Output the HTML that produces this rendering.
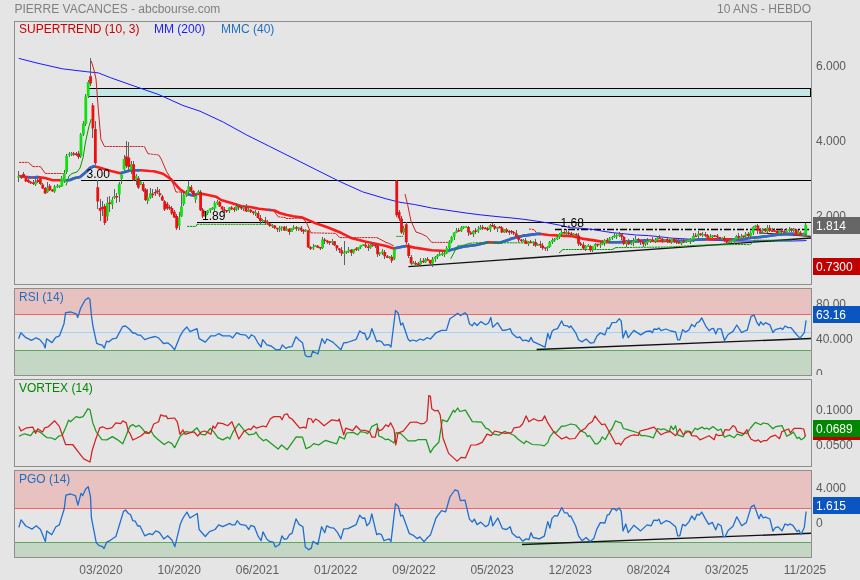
<!DOCTYPE html>
<html><head><meta charset="utf-8"><style>
html,body{margin:0;padding:0;background:#e5e5e5;width:860px;height:580px;overflow:hidden}
svg{display:block;will-change:transform}
text{font-family:"Liberation Sans",sans-serif}
</style></head><body>
<svg width="860" height="580">
<defs><clipPath id="cr"><rect x="812" y="288" width="48" height="87"/></clipPath></defs>
<text x="14.5" y="13" fill="#808080" font-size="12" text-anchor="start" >PIERRE VACANCES - abcbourse.com</text>
<text x="811" y="13" fill="#808080" font-size="12" text-anchor="end" >10 ANS - HEBDO</text>
<rect x="14.5" y="21.5" width="797" height="263" fill="#e5e5e5" stroke="#8e8e8e" stroke-width="1"/>
<rect x="14.5" y="288.5" width="797" height="87" fill="#e5e5e5" stroke="#8e8e8e" stroke-width="1"/>
<rect x="14.5" y="379.5" width="797" height="87" fill="#e5e5e5" stroke="#8e8e8e" stroke-width="1"/>
<rect x="14.5" y="470.5" width="797" height="87" fill="#e5e5e5" stroke="#8e8e8e" stroke-width="1"/>
<rect x="15" y="289" width="796" height="25" fill="#e8c1c1"/>
<rect x="15" y="351" width="796" height="24" fill="#c4d7c4"/>
<line x1="15" y1="314.5" x2="811" y2="314.5" stroke="#f06464" stroke-width="1"/>
<line x1="15" y1="350.5" x2="811" y2="350.5" stroke="#60a860" stroke-width="1"/>
<line x1="15" y1="332.5" x2="811" y2="332.5" stroke="#a4d0fa" stroke-width="1"/>
<rect x="15" y="471" width="796" height="37" fill="#e8c1c1"/>
<rect x="15" y="543" width="796" height="14" fill="#c4d7c4"/>
<line x1="15" y1="508.5" x2="811" y2="508.5" stroke="#f06464" stroke-width="1"/>
<line x1="15" y1="542.5" x2="811" y2="542.5" stroke="#60a860" stroke-width="1"/>
<text x="19" y="33" fill="#cc0000" font-size="12" text-anchor="start" >SUPERTREND (10, 3)</text>
<text x="154" y="33" fill="#1a1aff" font-size="12" text-anchor="start" >MM (200)</text>
<text x="221" y="33" fill="#1f6fc0" font-size="12" text-anchor="start" >MMC (40)</text>
<text x="19" y="301" fill="#1f6fc0" font-size="12" text-anchor="start" >RSI (14)</text>
<text x="19" y="392" fill="#008800" font-size="12" text-anchor="start" >VORTEX (14)</text>
<text x="19" y="483" fill="#1f6fc0" font-size="12" text-anchor="start" >PGO (14)</text>
<text x="816" y="70" fill="#5a5a5a" font-size="12" text-anchor="start" >6.000</text>
<text x="816" y="145" fill="#5a5a5a" font-size="12" text-anchor="start" >4.000</text>
<text x="816" y="220" fill="#5a5a5a" font-size="12" text-anchor="start" >2.000</text>
<text x="816" y="308" fill="#5a5a5a" font-size="12" text-anchor="start" >80.00</text>
<text x="816" y="343" fill="#5a5a5a" font-size="12" text-anchor="start" >40.000</text>
<text x="816" y="378" fill="#5a5a5a" font-size="12" text-anchor="start" clip-path="url(#cr)">0</text>
<text x="816" y="414" fill="#5a5a5a" font-size="12" text-anchor="start" >0.1000</text>
<text x="816" y="449" fill="#5a5a5a" font-size="12" text-anchor="start" >0.0500</text>
<text x="816" y="492" fill="#5a5a5a" font-size="12" text-anchor="start" >4.000</text>
<text x="816" y="527" fill="#5a5a5a" font-size="12" text-anchor="start" >0</text>
<rect x="813" y="217" width="47" height="17" fill="#666666"/>
<text x="816" y="230" fill="#ffffff" font-size="12" text-anchor="start" >1.814</text>
<rect x="813" y="258" width="47" height="17" fill="#c00000"/>
<text x="816" y="271" fill="#ffffff" font-size="12" text-anchor="start" >0.7300</text>
<rect x="813" y="306" width="47" height="17" fill="#0a55c0"/>
<text x="816" y="319" fill="#ffffff" font-size="12" text-anchor="start" >63.16</text>
<rect x="813" y="423" width="47" height="17" fill="#c00000"/>
<rect x="813" y="420" width="47" height="17" fill="#008800"/>
<text x="816" y="433" fill="#ffffff" font-size="12" text-anchor="start" >0.0689</text>
<rect x="813" y="497" width="47" height="17" fill="#0a55c0"/>
<text x="816" y="510" fill="#ffffff" font-size="12" text-anchor="start" >1.615</text>
<text x="101.0" y="574" fill="#606060" font-size="12" text-anchor="middle" >03/2020</text>
<text x="179.2" y="574" fill="#606060" font-size="12" text-anchor="middle" >10/2020</text>
<text x="257.4" y="574" fill="#606060" font-size="12" text-anchor="middle" >06/2021</text>
<text x="335.7" y="574" fill="#606060" font-size="12" text-anchor="middle" >01/2022</text>
<text x="413.9" y="574" fill="#606060" font-size="12" text-anchor="middle" >09/2022</text>
<text x="492.1" y="574" fill="#606060" font-size="12" text-anchor="middle" >05/2023</text>
<text x="570.3" y="574" fill="#606060" font-size="12" text-anchor="middle" >12/2023</text>
<text x="648.5" y="574" fill="#606060" font-size="12" text-anchor="middle" >08/2024</text>
<text x="726.8" y="574" fill="#606060" font-size="12" text-anchor="middle" >03/2025</text>
<text x="805.0" y="574" fill="#606060" font-size="12" text-anchor="middle" >11/2025</text>
<rect x="88.5" y="88.5" width="722" height="8" fill="#c4e8e6" stroke="#000" stroke-width="1"/>
<line x1="81" y1="180.5" x2="811" y2="180.5" stroke="#000" stroke-width="1"/>
<line x1="197" y1="222.5" x2="811" y2="222.5" stroke="#000" stroke-width="1"/>
<line x1="555" y1="229.5" x2="809" y2="229.5" stroke="#000" stroke-width="1.5" stroke-dasharray="7 2 2 2"/>
<polyline points="18.8,58.4 38.0,63.3 62.3,68.8 86.4,71.7 98.4,72.9 110.5,77.7 134.6,86.2 158.8,94.6 183.0,105.5 200.0,111.2 223.3,122.1 246.5,134.9 269.8,146.5 293.0,158.1 316.3,169.8 339.5,181.4 362.8,191.9 386.0,198.8 400.0,202.3 414.5,204.5 431.7,208.0 449.0,210.5 466.0,213.0 480.0,214.8 500.0,216.9 512.0,218.0 524.0,219.3 536.3,221.1 548.4,223.0 560.4,225.3 570.0,227.7 582.0,228.3 594.0,229.6 603.8,231.4 612.2,232.6 624.3,233.8 636.3,235.0 648.4,235.6 660.5,236.8 670.0,238.0 690.0,239.2 731.0,241.0 754.0,241.0 792.7,241.0 806.5,240.6" fill="none" stroke="#1a1aff" stroke-width="1"/>
<line x1="408.4" y1="266.6" x2="811" y2="238" stroke="#111" stroke-width="1.4"/>
<line x1="759" y1="232.8" x2="810.8" y2="236.3" stroke="#222" stroke-width="1.2"/>
<polyline points="19.0,176.0 27.0,177.0 31.0,177.5 38.0,177.1 45.0,178.0 52.8,180.2 64.0,180.2 70.0,180.0 74.0,178.3 80.0,177.0 86.0,172.0 90.0,168.0 94.0,166.3 100.0,167.8 111.0,171.0 120.3,173.3 131.0,170.3 140.5,170.3 149.8,171.0 154.0,171.2 163.0,173.8 171.6,179.8 180.0,189.3 188.0,194.5 194.0,195.5 198.6,193.4 207.0,194.7 216.0,196.7 221.0,200.0 233.0,203.6 241.7,206.2 250.0,207.0 259.0,208.8 267.6,209.7 274.5,210.5 279.7,213.0 286.0,214.8 293.0,216.2 302.5,217.6 313.6,222.4 327.4,227.2 341.0,232.8 352.0,238.3 366.0,241.7 375.6,243.8 386.0,245.9 393.8,248.4 405.9,245.9 414.5,247.6 431.7,250.2 447.0,251.0 462.8,246.7 476.0,245.0 488.0,242.2 500.0,242.8 512.0,238.6 524.3,235.6 538.7,233.8 548.4,235.0 560.4,235.6 572.5,236.2 582.0,238.6 594.0,240.4 606.0,242.2 618.3,242.2 630.3,241.6 647.2,240.4 654.4,241.0 666.0,241.0 684.0,241.0 696.0,239.8 705.8,239.2 716.7,239.2 731.0,239.2 741.0,239.7 749.6,238.0 758.2,237.2 766.9,236.3 775.5,235.0 784.0,234.1 792.7,233.7 801.3,234.6 806.5,233.7" fill="none" stroke="#ff1a1a" stroke-width="2.6" stroke-linejoin="round"/>
<clipPath id="cb"><rect x="28" y="21" width="3.5" height="263"/><rect x="33" y="21" width="5" height="263"/><rect x="64.5" y="21" width="31.099999999999994" height="263"/><rect x="120.3" y="21" width="19.700000000000003" height="263"/><rect x="188" y="21" width="9" height="263"/><rect x="268.5" y="21" width="1.8999999999999773" height="263"/><rect x="393.8" y="21" width="12.199999999999989" height="263"/><rect x="447" y="21" width="41" height="263"/><rect x="493" y="21" width="48" height="263"/><rect x="608.6" y="21" width="38.60000000000002" height="263"/><rect x="672" y="21" width="33.799999999999955" height="263"/><rect x="716.7" y="21" width="6.0" height="263"/><rect x="731" y="21" width="63.39999999999998" height="263"/><rect x="801.3" y="21" width="5.7000000000000455" height="263"/></clipPath>
<polyline points="19.0,176.0 27.0,177.0 31.0,177.5 38.0,177.1 45.0,178.0 52.8,180.2 64.0,180.2 70.0,180.0 74.0,178.3 80.0,177.0 86.0,172.0 90.0,168.0 94.0,166.3 100.0,167.8 111.0,171.0 120.3,173.3 131.0,170.3 140.5,170.3 149.8,171.0 154.0,171.2 163.0,173.8 171.6,179.8 180.0,189.3 188.0,194.5 194.0,195.5 198.6,193.4 207.0,194.7 216.0,196.7 221.0,200.0 233.0,203.6 241.7,206.2 250.0,207.0 259.0,208.8 267.6,209.7 274.5,210.5 279.7,213.0 286.0,214.8 293.0,216.2 302.5,217.6 313.6,222.4 327.4,227.2 341.0,232.8 352.0,238.3 366.0,241.7 375.6,243.8 386.0,245.9 393.8,248.4 405.9,245.9 414.5,247.6 431.7,250.2 447.0,251.0 462.8,246.7 476.0,245.0 488.0,242.2 500.0,242.8 512.0,238.6 524.3,235.6 538.7,233.8 548.4,235.0 560.4,235.6 572.5,236.2 582.0,238.6 594.0,240.4 606.0,242.2 618.3,242.2 630.3,241.6 647.2,240.4 654.4,241.0 666.0,241.0 684.0,241.0 696.0,239.8 705.8,239.2 716.7,239.2 731.0,239.2 741.0,239.7 749.6,238.0 758.2,237.2 766.9,236.3 775.5,235.0 784.0,234.1 792.7,233.7 801.3,234.6 806.5,233.7" fill="none" stroke="#1f6fd0" stroke-width="2.6" stroke-linejoin="round" clip-path="url(#cb)"/>
<line x1="19" y1="162.4" x2="28.4" y2="162.4" stroke="#d42020" stroke-width="1" stroke-dasharray="2.2 0.6"/>
<line x1="28.4" y1="162.4" x2="33" y2="166.6" stroke="#d42020" stroke-width="1"/>
<line x1="33" y1="166.6" x2="40.4" y2="166.6" stroke="#d42020" stroke-width="1" stroke-dasharray="2.2 0.6"/>
<line x1="40.4" y1="166.6" x2="45.4" y2="173.5" stroke="#d42020" stroke-width="1"/>
<line x1="45.4" y1="173.5" x2="64" y2="173.5" stroke="#d42020" stroke-width="1" stroke-dasharray="2.2 0.6"/>
<line x1="91.2" y1="60.9" x2="94" y2="70" stroke="#d42020" stroke-width="1"/>
<line x1="94" y1="70" x2="96" y2="79" stroke="#d42020" stroke-width="1"/>
<line x1="96" y1="79" x2="98.4" y2="110.3" stroke="#d42020" stroke-width="1"/>
<line x1="98.4" y1="110.3" x2="100.9" y2="139.3" stroke="#d42020" stroke-width="1"/>
<line x1="100.9" y1="139.3" x2="104.5" y2="146.5" stroke="#d42020" stroke-width="1"/>
<line x1="104.5" y1="146.5" x2="144.3" y2="146.5" stroke="#d42020" stroke-width="1" stroke-dasharray="2.2 0.6"/>
<line x1="144.3" y1="146.5" x2="148" y2="153.7" stroke="#d42020" stroke-width="1"/>
<line x1="148" y1="153.7" x2="158.8" y2="155" stroke="#d42020" stroke-width="1" stroke-dasharray="2.2 0.6"/>
<line x1="158.8" y1="155" x2="161.2" y2="159" stroke="#d42020" stroke-width="1"/>
<line x1="161.2" y1="159" x2="166.4" y2="171.2" stroke="#d42020" stroke-width="1"/>
<line x1="166.4" y1="171.2" x2="171.6" y2="179.8" stroke="#d42020" stroke-width="1"/>
<line x1="171.6" y1="179.8" x2="176" y2="192" stroke="#d42020" stroke-width="1"/>
<line x1="176" y1="192" x2="185" y2="192" stroke="#d42020" stroke-width="1" stroke-dasharray="2.2 0.6"/>
<line x1="273.9" y1="210.8" x2="276.2" y2="214.2" stroke="#d42020" stroke-width="1"/>
<line x1="276.2" y1="214.2" x2="278.4" y2="216.8" stroke="#d42020" stroke-width="1"/>
<line x1="278.4" y1="216.8" x2="285.7" y2="217.7" stroke="#d42020" stroke-width="1" stroke-dasharray="2.2 0.6"/>
<line x1="285.7" y1="217.7" x2="286.1" y2="218.5" stroke="#d42020" stroke-width="1"/>
<line x1="286.1" y1="218.5" x2="292.2" y2="218.5" stroke="#d42020" stroke-width="1" stroke-dasharray="2.2 0.6"/>
<line x1="292.2" y1="218.5" x2="302.5" y2="217.6" stroke="#d42020" stroke-width="1" stroke-dasharray="2.2 0.6"/>
<line x1="302.5" y1="217.6" x2="306.7" y2="223" stroke="#d42020" stroke-width="1"/>
<line x1="306.7" y1="223" x2="310.8" y2="232.8" stroke="#d42020" stroke-width="1"/>
<line x1="310.8" y1="232.8" x2="335.6" y2="233.4" stroke="#d42020" stroke-width="1" stroke-dasharray="2.2 0.6"/>
<line x1="335.6" y1="233.4" x2="339.8" y2="237.6" stroke="#d42020" stroke-width="1"/>
<line x1="339.8" y1="237.6" x2="377" y2="237.6" stroke="#d42020" stroke-width="1" stroke-dasharray="2.2 0.6"/>
<line x1="377" y1="237.6" x2="381" y2="239.7" stroke="#d42020" stroke-width="1"/>
<line x1="381" y1="239.7" x2="386" y2="242.4" stroke="#d42020" stroke-width="1"/>
<line x1="386" y1="242.4" x2="388.6" y2="243.3" stroke="#d42020" stroke-width="1"/>
<line x1="388.6" y1="243.3" x2="393.8" y2="245.9" stroke="#d42020" stroke-width="1"/>
<line x1="405" y1="194" x2="407.6" y2="204.5" stroke="#d42020" stroke-width="1"/>
<line x1="407.6" y1="204.5" x2="411" y2="221" stroke="#d42020" stroke-width="1"/>
<line x1="411" y1="221" x2="416" y2="232" stroke="#d42020" stroke-width="1"/>
<line x1="416" y1="232" x2="421.4" y2="233.8" stroke="#d42020" stroke-width="1"/>
<line x1="421.4" y1="233.8" x2="426.6" y2="236.4" stroke="#d42020" stroke-width="1"/>
<line x1="426.6" y1="236.4" x2="431.7" y2="242.4" stroke="#d42020" stroke-width="1"/>
<line x1="431.7" y1="242.4" x2="448" y2="242.4" stroke="#d42020" stroke-width="1" stroke-dasharray="2.2 0.6"/>
<line x1="529" y1="229" x2="534" y2="229.6" stroke="#d42020" stroke-width="1" stroke-dasharray="2.2 0.6"/>
<line x1="534" y1="229.6" x2="536.3" y2="232.6" stroke="#d42020" stroke-width="1"/>
<line x1="66" y1="185.5" x2="69" y2="176" stroke="#009a00" stroke-width="1"/>
<line x1="69" y1="176" x2="72" y2="173.5" stroke="#009a00" stroke-width="1"/>
<line x1="72" y1="173.5" x2="77" y2="172" stroke="#009a00" stroke-width="1"/>
<line x1="77" y1="172" x2="80" y2="168" stroke="#009a00" stroke-width="1"/>
<line x1="80" y1="168" x2="83" y2="158" stroke="#009a00" stroke-width="1"/>
<line x1="83" y1="158" x2="85.5" y2="142" stroke="#009a00" stroke-width="1"/>
<line x1="85.5" y1="142" x2="88.8" y2="127" stroke="#009a00" stroke-width="1"/>
<line x1="88.8" y1="127" x2="91.2" y2="119" stroke="#009a00" stroke-width="1"/>
<line x1="187" y1="226.4" x2="196" y2="226.4" stroke="#009a00" stroke-width="1" stroke-dasharray="2.2 0.6"/>
<line x1="196" y1="226.4" x2="197" y2="224.3" stroke="#009a00" stroke-width="1"/>
<line x1="197" y1="224.3" x2="271" y2="224.3" stroke="#009a00" stroke-width="1" stroke-dasharray="2.2 0.6"/>
<line x1="396.4" y1="236.4" x2="403" y2="236.4" stroke="#009a00" stroke-width="1" stroke-dasharray="2.2 0.6"/>
<line x1="450.7" y1="258.8" x2="457.6" y2="245.9" stroke="#009a00" stroke-width="1"/>
<line x1="457.6" y1="245.9" x2="464.5" y2="245" stroke="#009a00" stroke-width="1" stroke-dasharray="2.2 0.6"/>
<line x1="464.5" y1="245" x2="469.7" y2="243.3" stroke="#009a00" stroke-width="1"/>
<line x1="469.7" y1="243.3" x2="476" y2="242.8" stroke="#009a00" stroke-width="1" stroke-dasharray="2.2 0.6"/>
<line x1="476" y1="242.8" x2="532.7" y2="242.8" stroke="#009a00" stroke-width="1" stroke-dasharray="2.2 0.6"/>
<line x1="559" y1="253" x2="563" y2="249.5" stroke="#009a00" stroke-width="1"/>
<line x1="563" y1="249.5" x2="612.2" y2="249.5" stroke="#009a00" stroke-width="1" stroke-dasharray="2.2 0.6"/>
<line x1="612.2" y1="249.5" x2="615.8" y2="247.6" stroke="#009a00" stroke-width="1"/>
<line x1="615.8" y1="247.6" x2="670" y2="247" stroke="#009a00" stroke-width="1" stroke-dasharray="2.2 0.6"/>
<line x1="670" y1="247" x2="698.6" y2="245.2" stroke="#009a00" stroke-width="1" stroke-dasharray="2.2 0.6"/>
<line x1="698.6" y1="245.2" x2="741" y2="244.5" stroke="#009a00" stroke-width="1" stroke-dasharray="2.2 0.6"/>
<line x1="741" y1="244.5" x2="750.4" y2="244.6" stroke="#009a00" stroke-width="1" stroke-dasharray="2.2 0.6"/>
<line x1="750.4" y1="244.6" x2="754" y2="240.2" stroke="#009a00" stroke-width="1"/>
<line x1="754" y1="240.2" x2="792.7" y2="240.2" stroke="#009a00" stroke-width="1" stroke-dasharray="2.2 0.6"/>
<path d="M18.80 171.0V181.8M21.19 175.0V179.0M23.58 172.0V178.0M25.98 176.0V182.0M28.37 179.0V183.0M30.76 181.0V184.0M33.15 180.0V185.0M35.54 179.0V185.5M37.94 178.0V183.0M40.33 177.0V185.0M42.72 183.0V189.0M45.11 187.0V194.0M47.50 182.0V193.0M49.90 184.0V191.0M52.29 189.0V192.0M54.68 185.0V192.5M57.07 184.0V188.0M59.46 185.0V187.5M61.86 176.0V187.0M64.25 170.0V183.0M66.64 154.0V174.0M69.03 152.0V157.0M71.42 152.0V156.0M73.82 152.0V156.0M76.21 152.0V156.0M78.60 151.0V159.0M80.99 133.0V158.0M83.38 121.0V136.0M85.78 94.0V126.0M88.17 80.0V98.0M90.56 58.0V86.0M92.95 103.0V138.0M95.34 120.9V165.0M97.74 180.2V208.6M100.13 198.8V220.5M102.52 201.0V215.8M104.91 204.0V225.0M107.30 197.0V220.5M109.70 196.0V211.7M112.09 196.7V208.6M114.48 189.0V199.3M116.87 193.0V203.4M119.26 181.7V201.9M121.66 173.0V184.0M124.05 155.0V171.0M126.44 141.0V168.0M128.83 141.7V172.0M131.22 160.7V173.6M133.62 161.2V181.0M136.01 174.0V184.5M138.40 176.0V189.0M140.79 180.8V185.0M143.18 182.0V192.0M145.58 188.0V201.0M147.97 189.0V203.7M150.36 188.0V199.0M152.75 189.0V197.5M155.14 189.0V196.0M157.54 187.0V194.0M159.93 189.0V197.0M162.32 195.0V201.0M164.71 200.0V210.5M167.10 202.0V210.0M169.50 205.0V209.5M171.89 206.0V215.0M174.28 210.0V218.0M176.67 214.0V229.5M179.06 212.0V229.8M181.46 192.3V217.0M183.85 193.0V205.5M186.24 190.0V197.0M188.63 181.0V194.2M191.02 185.0V193.0M193.42 190.0V197.0M195.81 193.0V202.7M198.20 190.0V194.0M200.59 190.0V211.0M202.98 208.0V218.0M205.38 212.1V217.6M207.77 209.5V215.2M210.16 208.0V213.4M212.55 207.1V210.3M214.94 201.4V211.4M217.34 200.3V204.7M219.73 200.5V207.2M222.12 206.1V212.1M224.51 207.0V212.7M226.90 209.5V212.6M229.30 206.7V212.7M231.69 206.3V210.0M234.08 207.0V211.9M236.47 203.2V211.0M238.86 204.3V209.6M241.26 205.6V210.3M243.65 205.0V211.3M246.04 204.3V212.4M248.43 206.9V212.1M250.82 209.0V213.3M253.22 211.2V215.2M255.61 210.3V215.8M258.00 210.7V218.7M260.39 215.1V224.1M262.78 218.9V222.7M265.18 217.2V224.5M267.57 220.0V224.8M269.96 222.7V227.2M272.35 223.7V227.5M274.74 225.3V229.2M277.14 227.5V232.1M279.53 226.0V232.1M281.92 226.4V231.2M284.31 225.7V231.1M286.70 226.1V231.4M289.10 228.0V234.8M291.49 227.8V232.3M293.88 225.4V229.9M296.27 225.5V230.9M298.66 227.1V231.0M301.06 226.0V231.9M303.45 228.7V233.6M305.84 228.6V231.6M308.23 229.8V248.2M310.62 246.3V249.6M313.02 244.2V249.6M315.41 244.5V247.1M317.80 244.8V248.0M320.19 246.8V249.5M322.58 236.6V248.5M324.98 237.9V243.7M327.37 239.6V243.9M329.76 240.8V245.1M332.15 238.9V244.6M334.54 240.8V245.9M336.94 244.7V251.0M339.33 248.0V252.9M341.72 247.4V255.9M344.11 241.0V264.5M346.50 250.7V253.9M348.90 246.6V253.3M351.29 248.8V255.8M353.68 248.6V254.1M356.07 247.2V251.2M358.46 246.9V250.5M360.86 244.6V248.7M363.25 243.6V246.1M365.64 242.8V248.4M368.03 244.2V250.5M370.42 243.3V248.9M372.82 242.3V247.4M375.21 244.8V248.4M377.60 243.2V256.9M379.99 251.7V256.1M382.38 249.3V255.1M384.78 250.0V259.2M387.17 255.3V258.1M389.56 256.1V259.1M391.95 254.8V262.8M394.34 247.0V260.0M396.74 180.0V217.0M399.13 210.0V221.0M401.52 216.0V234.0M403.91 226.0V235.0M406.30 222.0V244.0M408.70 243.0V258.0M411.09 255.0V265.0M413.48 261.2V264.0M415.87 260.9V265.3M418.26 262.1V264.6M420.66 258.4V266.5M423.05 258.4V263.4M425.44 257.9V262.9M427.83 256.7V261.0M430.22 259.8V265.1M432.62 256.6V266.5M435.01 256.1V262.4M437.40 254.4V259.0M439.79 251.3V256.0M442.18 251.1V256.1M444.58 252.4V256.7M446.97 246.3V253.8M449.36 240.0V249.2M451.75 236.4V242.9M454.14 232.3V239.6M456.54 227.9V233.2M458.93 227.8V232.0M461.32 226.0V232.3M463.71 225.9V228.9M466.10 225.8V227.7M468.50 225.8V235.5M470.89 231.4V235.3M473.28 229.5V237.3M475.67 228.1V234.1M478.06 226.3V233.3M480.46 225.1V229.8M482.85 225.0V230.4M485.24 227.1V229.1M487.63 227.0V231.1M490.02 224.2V232.2M492.42 223.2V227.1M494.81 224.1V230.0M497.20 226.5V231.5M499.59 225.7V228.4M501.98 225.9V233.2M504.38 228.5V233.1M506.77 228.4V232.8M509.16 229.8V234.7M511.55 230.3V233.8M513.94 230.6V234.8M516.34 230.4V237.4M518.73 234.9V241.8M521.12 238.6V241.7M523.51 239.2V242.3M525.90 237.8V244.4M528.30 241.2V246.4M530.69 239.6V243.1M533.08 240.5V245.8M535.47 238.9V246.6M537.86 243.4V246.3M540.26 241.0V247.8M542.65 243.2V250.4M545.04 247.5V250.6M547.43 246.1V251.0M549.82 241.3V248.1M552.22 237.9V244.3M554.61 237.6V242.0M557.00 235.8V240.4M559.39 232.9V238.9M561.78 228.9V236.2M564.18 231.0V234.4M566.57 229.4V235.8M568.96 230.8V236.2M571.35 232.4V235.7M573.74 233.2V235.0M576.14 232.9V236.9M578.53 232.7V246.2M580.92 242.0V245.7M583.31 242.1V249.5M585.70 245.0V251.0M588.10 244.2V246.8M590.49 245.0V251.7M592.88 245.5V251.6M595.27 243.2V249.4M597.66 243.6V246.6M600.06 241.1V248.0M602.45 240.2V245.3M604.84 239.3V246.2M607.23 238.0V242.0M609.62 237.2V241.9M612.02 235.9V239.9M614.41 232.7V237.6M616.80 234.2V238.5M619.19 231.6V237.1M621.58 232.9V239.6M623.98 235.8V245.4M626.37 240.3V246.7M628.76 239.2V244.6M631.15 239.9V245.3M633.54 238.4V245.8M635.94 236.1V243.0M638.33 238.1V242.7M640.72 240.0V244.5M643.11 239.0V246.5M645.50 241.2V246.0M647.90 238.1V245.2M650.29 238.6V242.9M652.68 237.2V241.6M655.07 237.6V243.3M657.46 235.7V241.6M659.86 235.2V239.4M662.25 238.0V243.0M664.64 239.2V242.4M667.03 238.4V243.0M669.42 238.8V243.0M671.82 238.1V244.2M674.21 237.7V243.0M676.60 239.4V243.9M678.99 239.4V244.0M681.38 238.5V244.5M683.78 238.8V243.1M686.17 239.7V243.2M688.56 238.5V241.9M690.95 238.0V243.7M693.34 233.2V241.6M695.74 232.7V236.9M698.13 231.1V239.3M700.52 233.4V236.0M702.91 231.5V236.9M705.30 231.6V236.7M707.70 234.3V240.3M710.09 233.5V238.3M712.48 235.1V237.9M714.87 235.3V236.9M717.26 233.8V237.9M719.66 236.7V240.3M722.05 236.9V240.0M724.44 235.5V242.1M726.83 238.8V244.3M729.22 239.8V242.9M731.62 239.1V243.1M734.01 238.1V243.6M736.40 234.7V240.8M738.79 233.3V241.0M741.18 233.8V238.7M743.58 235.9V239.4M745.97 232.2V239.3M748.36 232.1V236.8M750.75 230.5V239.0M753.14 226.3V234.8M755.54 224.9V228.0M757.93 223.8V233.8M760.32 228.2V234.1M762.71 228.4V231.7M765.10 227.6V231.8M767.50 224.7V232.7M769.89 225.0V231.7M772.28 228.3V231.9M774.67 228.2V231.9M777.06 230.1V234.6M779.46 229.9V234.2M781.85 228.2V234.7M784.24 229.3V232.6M786.63 227.9V232.8M789.02 227.2V231.8M791.42 227.8V231.9M793.81 228.0V231.5M796.20 229.2V235.1M798.59 230.3V235.6M800.98 231.2V235.2M803.38 233.0V236.0M805.77 223.0V235.0" stroke="#606060" stroke-width="1" fill="none" shape-rendering="crispEdges"/>
<path d="M17.40 176.0h2.8V177.5h-2.8ZM34.14 181.4h2.8V184.5h-2.8ZM46.10 187.6h2.8V192.3h-2.8ZM53.28 186.8h2.8V191.5h-2.8ZM55.67 185.8h2.8V187.2h-2.8ZM58.06 185.5h2.8V187.0h-2.8ZM60.46 178.3h2.8V186.4h-2.8ZM62.85 173.0h2.8V181.0h-2.8ZM65.24 156.0h2.8V172.0h-2.8ZM67.63 153.8h2.8V155.2h-2.8ZM70.02 153.5h2.8V155.0h-2.8ZM79.59 134.3h2.8V156.5h-2.8ZM81.98 123.4h2.8V134.3h-2.8ZM84.38 96.4h2.8V124.0h-2.8ZM86.77 81.9h2.8V96.4h-2.8ZM105.90 203.0h2.8V216.4h-2.8ZM110.69 199.8h2.8V204.5h-2.8ZM113.08 195.9h2.8V197.4h-2.8ZM117.86 183.8h2.8V194.6h-2.8ZM120.26 174.6h2.8V178.8h-2.8ZM122.65 159.1h2.8V169.5h-2.8ZM129.82 164.3h2.8V170.0h-2.8ZM134.61 175.7h2.8V179.8h-2.8ZM139.39 181.4h2.8V184.5h-2.8ZM146.57 197.5h2.8V201.3h-2.8ZM148.96 193.3h2.8V197.5h-2.8ZM177.66 217.4h2.8V226.0h-2.8ZM180.06 206.5h2.8V216.5h-2.8ZM182.45 194.7h2.8V204.2h-2.8ZM184.84 192.5h2.8V195.0h-2.8ZM187.23 186.2h2.8V192.3h-2.8ZM194.41 196.0h2.8V199.4h-2.8ZM196.80 191.4h2.8V193.7h-2.8ZM203.98 213.2h2.8V216.5h-2.8ZM206.37 210.5h2.8V213.2h-2.8ZM208.76 208.6h2.8V210.5h-2.8ZM211.15 207.8h2.8V209.3h-2.8ZM213.54 202.9h2.8V208.4h-2.8ZM215.94 201.7h2.8V203.2h-2.8ZM227.90 207.4h2.8V210.8h-2.8ZM235.07 206.1h2.8V209.4h-2.8ZM242.25 207.1h2.8V208.6h-2.8ZM247.03 209.7h2.8V211.4h-2.8ZM254.21 212.2h2.8V213.7h-2.8ZM261.38 219.9h2.8V221.4h-2.8ZM270.95 225.0h2.8V226.5h-2.8ZM278.13 228.0h2.8V229.5h-2.8ZM280.52 226.8h2.8V228.6h-2.8ZM285.30 228.7h2.8V230.4h-2.8ZM290.09 228.3h2.8V231.9h-2.8ZM292.48 227.3h2.8V228.8h-2.8ZM297.26 227.2h2.8V228.7h-2.8ZM304.44 229.8h2.8V231.3h-2.8ZM311.62 246.7h2.8V248.4h-2.8ZM314.01 245.5h2.8V247.0h-2.8ZM321.18 239.6h2.8V247.9h-2.8ZM330.75 241.1h2.8V242.6h-2.8ZM342.71 252.2h2.8V253.7h-2.8ZM345.10 251.1h2.8V252.6h-2.8ZM347.50 249.8h2.8V251.4h-2.8ZM352.28 248.9h2.8V252.7h-2.8ZM357.06 247.2h2.8V249.5h-2.8ZM359.46 245.1h2.8V247.2h-2.8ZM361.85 244.2h2.8V245.7h-2.8ZM369.02 244.7h2.8V247.7h-2.8ZM378.59 252.4h2.8V254.2h-2.8ZM380.98 251.4h2.8V252.9h-2.8ZM388.16 256.5h2.8V258.0h-2.8ZM392.94 249.6h2.8V258.6h-2.8ZM402.51 228.3h2.8V232.4h-2.8ZM412.08 262.7h2.8V264.2h-2.8ZM419.26 260.7h2.8V264.2h-2.8ZM424.04 259.6h2.8V262.3h-2.8ZM431.22 259.3h2.8V263.4h-2.8ZM433.61 257.1h2.8V259.3h-2.8ZM436.00 255.3h2.8V257.1h-2.8ZM438.39 254.1h2.8V255.6h-2.8ZM440.78 253.3h2.8V254.8h-2.8ZM443.18 252.9h2.8V254.4h-2.8ZM445.57 248.0h2.8V253.4h-2.8ZM447.96 241.6h2.8V248.0h-2.8ZM450.35 237.1h2.8V241.6h-2.8ZM452.74 232.6h2.8V237.1h-2.8ZM455.14 230.7h2.8V232.6h-2.8ZM459.92 227.4h2.8V230.8h-2.8ZM462.31 226.6h2.8V228.1h-2.8ZM464.70 226.3h2.8V227.8h-2.8ZM471.88 230.9h2.8V234.2h-2.8ZM476.66 229.3h2.8V231.4h-2.8ZM479.06 227.5h2.8V229.3h-2.8ZM488.62 225.4h2.8V229.8h-2.8ZM495.80 227.3h2.8V228.8h-2.8ZM502.98 229.4h2.8V232.5h-2.8ZM522.11 239.9h2.8V241.4h-2.8ZM526.90 241.6h2.8V244.0h-2.8ZM531.68 241.6h2.8V243.1h-2.8ZM536.46 244.0h2.8V245.5h-2.8ZM546.03 246.8h2.8V248.3h-2.8ZM548.42 242.0h2.8V247.1h-2.8ZM550.82 240.0h2.8V242.0h-2.8ZM553.21 239.0h2.8V240.5h-2.8ZM555.60 237.2h2.8V239.4h-2.8ZM557.99 234.1h2.8V237.2h-2.8ZM560.38 231.9h2.8V234.1h-2.8ZM565.17 232.2h2.8V233.7h-2.8ZM572.34 233.7h2.8V235.2h-2.8ZM584.30 246.0h2.8V248.5h-2.8ZM586.70 245.2h2.8V246.7h-2.8ZM591.48 246.2h2.8V250.2h-2.8ZM593.87 244.1h2.8V246.2h-2.8ZM598.66 243.8h2.8V245.3h-2.8ZM601.05 242.9h2.8V244.4h-2.8ZM603.44 240.2h2.8V243.2h-2.8ZM608.22 238.6h2.8V240.6h-2.8ZM610.62 237.0h2.8V238.6h-2.8ZM613.01 235.6h2.8V237.1h-2.8ZM615.40 234.9h2.8V236.4h-2.8ZM617.79 234.2h2.8V235.7h-2.8ZM624.97 241.7h2.8V244.0h-2.8ZM629.75 242.8h2.8V244.3h-2.8ZM632.14 240.9h2.8V242.9h-2.8ZM634.54 239.1h2.8V240.9h-2.8ZM644.10 242.2h2.8V244.3h-2.8ZM646.50 240.9h2.8V242.4h-2.8ZM648.89 239.9h2.8V241.4h-2.8ZM653.67 239.8h2.8V241.3h-2.8ZM656.06 237.7h2.8V240.3h-2.8ZM663.24 239.3h2.8V240.8h-2.8ZM670.42 238.6h2.8V242.5h-2.8ZM679.98 241.3h2.8V243.4h-2.8ZM684.77 240.7h2.8V242.2h-2.8ZM687.16 239.8h2.8V241.3h-2.8ZM689.55 239.2h2.8V240.7h-2.8ZM691.94 235.9h2.8V239.4h-2.8ZM696.73 233.8h2.8V236.3h-2.8ZM701.51 234.0h2.8V235.5h-2.8ZM708.69 236.4h2.8V237.9h-2.8ZM711.08 235.5h2.8V237.0h-2.8ZM720.65 237.8h2.8V239.3h-2.8ZM727.82 241.4h2.8V242.9h-2.8ZM730.22 240.5h2.8V242.0h-2.8ZM732.61 239.2h2.8V240.7h-2.8ZM735.00 236.1h2.8V239.2h-2.8ZM739.78 236.2h2.8V237.8h-2.8ZM744.57 233.7h2.8V236.5h-2.8ZM749.35 232.7h2.8V236.1h-2.8ZM751.74 226.9h2.8V232.7h-2.8ZM754.14 225.5h2.8V227.0h-2.8ZM761.31 229.3h2.8V231.0h-2.8ZM766.10 227.7h2.8V231.3h-2.8ZM778.06 230.6h2.8V233.2h-2.8ZM785.23 230.7h2.8V232.2h-2.8ZM787.62 229.2h2.8V230.7h-2.8ZM792.41 229.0h2.8V230.5h-2.8ZM797.19 232.1h2.8V233.6h-2.8ZM801.98 233.7h2.8V235.2h-2.8ZM804.37 224.7h2.8V234.0h-2.8Z" fill="#10e010"/>
<path d="M19.79 176.2h2.8V177.8h-2.8ZM22.18 174.0h2.8V177.0h-2.8ZM24.58 178.0h2.8V181.4h-2.8ZM26.97 180.0h2.8V182.0h-2.8ZM29.36 181.8h2.8V183.2h-2.8ZM31.75 182.5h2.8V184.0h-2.8ZM36.54 180.0h2.8V182.0h-2.8ZM38.93 178.7h2.8V184.0h-2.8ZM41.32 184.5h2.8V188.4h-2.8ZM43.71 188.0h2.8V193.4h-2.8ZM48.50 185.7h2.8V190.3h-2.8ZM50.89 189.8h2.8V191.3h-2.8ZM72.42 153.2h2.8V154.8h-2.8ZM74.81 153.5h2.8V155.0h-2.8ZM77.20 153.4h2.8V157.0h-2.8ZM89.16 76.2h2.8V83.4h-2.8ZM91.55 105.2h2.8V128.6h-2.8ZM93.94 129.1h2.8V163.3h-2.8ZM96.34 187.2h2.8V201.4h-2.8ZM98.73 208.0h2.8V210.7h-2.8ZM101.12 207.0h2.8V209.0h-2.8ZM103.51 206.0h2.8V223.0h-2.8ZM108.30 202.4h2.8V204.0h-2.8ZM115.47 196.0h2.8V197.5h-2.8ZM125.04 156.5h2.8V165.9h-2.8ZM127.43 157.6h2.8V166.9h-2.8ZM132.22 164.3h2.8V179.8h-2.8ZM137.00 178.3h2.8V187.6h-2.8ZM141.78 184.0h2.8V190.7h-2.8ZM144.18 189.6h2.8V200.0h-2.8ZM151.35 193.7h2.8V195.2h-2.8ZM153.74 192.0h2.8V193.5h-2.8ZM156.14 190.4h2.8V192.3h-2.8ZM158.53 193.3h2.8V195.2h-2.8ZM160.92 196.6h2.8V200.4h-2.8ZM163.31 201.3h2.8V209.4h-2.8ZM165.70 203.7h2.8V208.4h-2.8ZM168.10 207.0h2.8V208.5h-2.8ZM170.49 208.0h2.8V213.6h-2.8ZM172.88 211.8h2.8V217.4h-2.8ZM175.27 216.0h2.8V228.3h-2.8ZM189.62 187.0h2.8V191.8h-2.8ZM192.02 191.0h2.8V195.6h-2.8ZM199.19 191.8h2.8V210.3h-2.8ZM201.58 209.4h2.8V216.5h-2.8ZM218.33 202.1h2.8V206.4h-2.8ZM220.72 206.4h2.8V209.4h-2.8ZM223.11 209.4h2.8V210.9h-2.8ZM225.50 210.1h2.8V211.6h-2.8ZM230.29 207.4h2.8V208.9h-2.8ZM232.68 208.4h2.8V209.9h-2.8ZM237.46 205.9h2.8V207.4h-2.8ZM239.86 207.1h2.8V208.6h-2.8ZM244.64 207.3h2.8V211.4h-2.8ZM249.42 209.7h2.8V211.7h-2.8ZM251.82 211.6h2.8V213.1h-2.8ZM256.60 212.9h2.8V218.0h-2.8ZM258.99 218.0h2.8V221.0h-2.8ZM263.78 220.3h2.8V221.8h-2.8ZM266.17 221.8h2.8V223.5h-2.8ZM268.56 223.5h2.8V226.0h-2.8ZM273.34 225.6h2.8V228.0h-2.8ZM275.74 227.7h2.8V229.2h-2.8ZM282.91 226.8h2.8V230.4h-2.8ZM287.70 228.7h2.8V231.9h-2.8ZM294.87 227.2h2.8V228.7h-2.8ZM299.66 227.7h2.8V230.6h-2.8ZM302.05 229.9h2.8V231.4h-2.8ZM306.83 230.5h2.8V247.5h-2.8ZM309.22 247.2h2.8V248.7h-2.8ZM316.40 245.8h2.8V247.7h-2.8ZM318.79 247.0h2.8V248.5h-2.8ZM323.58 239.5h2.8V241.0h-2.8ZM325.97 240.8h2.8V242.3h-2.8ZM328.36 241.5h2.8V243.0h-2.8ZM333.14 241.3h2.8V245.3h-2.8ZM335.54 245.3h2.8V248.6h-2.8ZM337.93 248.6h2.8V250.2h-2.8ZM340.32 250.2h2.8V253.6h-2.8ZM349.89 249.8h2.8V252.7h-2.8ZM354.67 248.4h2.8V249.9h-2.8ZM364.24 244.8h2.8V246.6h-2.8ZM366.63 246.4h2.8V247.9h-2.8ZM371.42 244.2h2.8V245.7h-2.8ZM373.81 244.7h2.8V246.2h-2.8ZM376.20 245.6h2.8V254.2h-2.8ZM383.38 252.0h2.8V256.3h-2.8ZM385.77 256.3h2.8V257.8h-2.8ZM390.55 256.8h2.8V260.7h-2.8ZM395.34 180.7h2.8V215.2h-2.8ZM397.73 212.0h2.8V218.4h-2.8ZM400.12 218.4h2.8V232.4h-2.8ZM404.90 224.2h2.8V242.2h-2.8ZM407.30 244.7h2.8V256.0h-2.8ZM409.69 257.0h2.8V263.5h-2.8ZM414.47 262.9h2.8V264.4h-2.8ZM416.86 263.4h2.8V264.9h-2.8ZM421.65 260.7h2.8V262.3h-2.8ZM426.43 259.1h2.8V260.6h-2.8ZM428.82 260.1h2.8V263.4h-2.8ZM457.53 230.0h2.8V231.5h-2.8ZM467.10 226.9h2.8V232.4h-2.8ZM469.49 232.4h2.8V234.2h-2.8ZM474.27 230.4h2.8V231.9h-2.8ZM481.45 227.1h2.8V228.6h-2.8ZM483.84 227.7h2.8V229.2h-2.8ZM486.23 228.5h2.8V230.0h-2.8ZM491.02 224.9h2.8V226.4h-2.8ZM493.41 226.0h2.8V228.6h-2.8ZM498.19 226.7h2.8V228.2h-2.8ZM500.58 227.5h2.8V232.5h-2.8ZM505.37 229.4h2.8V231.7h-2.8ZM507.76 231.0h2.8V232.5h-2.8ZM510.15 231.1h2.8V232.6h-2.8ZM512.54 231.9h2.8V233.5h-2.8ZM514.94 233.5h2.8V236.7h-2.8ZM517.33 236.7h2.8V239.7h-2.8ZM519.72 239.4h2.8V240.9h-2.8ZM524.50 240.6h2.8V244.0h-2.8ZM529.29 241.4h2.8V242.9h-2.8ZM534.07 242.0h2.8V245.5h-2.8ZM538.86 244.0h2.8V245.5h-2.8ZM541.25 245.4h2.8V247.9h-2.8ZM543.64 247.2h2.8V248.7h-2.8ZM562.78 231.9h2.8V233.4h-2.8ZM567.56 232.5h2.8V234.0h-2.8ZM569.95 233.5h2.8V235.0h-2.8ZM574.74 234.0h2.8V235.5h-2.8ZM577.13 235.4h2.8V243.8h-2.8ZM579.52 243.5h2.8V245.0h-2.8ZM581.91 244.8h2.8V248.5h-2.8ZM589.09 245.9h2.8V250.2h-2.8ZM596.26 243.8h2.8V245.3h-2.8ZM605.83 239.7h2.8V241.2h-2.8ZM620.18 234.3h2.8V236.7h-2.8ZM622.58 236.7h2.8V244.0h-2.8ZM627.36 241.7h2.8V244.2h-2.8ZM636.93 239.0h2.8V240.5h-2.8ZM639.32 240.3h2.8V242.0h-2.8ZM641.71 242.0h2.8V244.3h-2.8ZM651.28 239.7h2.8V241.2h-2.8ZM658.46 237.5h2.8V239.0h-2.8ZM660.85 238.8h2.8V240.5h-2.8ZM665.63 239.0h2.8V240.5h-2.8ZM668.02 239.9h2.8V242.5h-2.8ZM672.81 238.6h2.8V241.5h-2.8ZM675.20 240.8h2.8V242.3h-2.8ZM677.59 241.7h2.8V243.4h-2.8ZM682.38 241.0h2.8V242.5h-2.8ZM694.34 235.4h2.8V236.9h-2.8ZM699.12 233.6h2.8V235.1h-2.8ZM703.90 234.2h2.8V235.7h-2.8ZM706.30 235.3h2.8V237.7h-2.8ZM713.47 235.3h2.8V236.8h-2.8ZM715.86 235.8h2.8V237.3h-2.8ZM718.26 237.1h2.8V239.1h-2.8ZM723.04 238.1h2.8V240.2h-2.8ZM725.43 240.2h2.8V242.4h-2.8ZM737.39 236.1h2.8V237.8h-2.8ZM742.18 235.6h2.8V237.1h-2.8ZM746.96 233.7h2.8V236.1h-2.8ZM756.53 225.6h2.8V230.8h-2.8ZM758.92 230.2h2.8V231.7h-2.8ZM763.70 229.3h2.8V231.3h-2.8ZM768.49 227.7h2.8V230.9h-2.8ZM770.88 230.2h2.8V231.7h-2.8ZM773.27 230.2h2.8V231.7h-2.8ZM775.66 231.0h2.8V233.2h-2.8ZM780.45 230.5h2.8V232.0h-2.8ZM782.84 231.2h2.8V232.7h-2.8ZM790.02 228.9h2.8V230.4h-2.8ZM794.80 229.6h2.8V233.0h-2.8ZM799.58 232.8h2.8V234.4h-2.8Z" fill="#ee1010"/>
<text x="86.5" y="177.5" fill="#000" font-size="12" text-anchor="start" >3.00</text>
<text x="202" y="220" fill="#000" font-size="12" text-anchor="start" >1.89</text>
<text x="560.5" y="226.5" fill="#000" font-size="12" text-anchor="start" >1.68</text>
<line x1="536.6" y1="349.5" x2="811" y2="338.5" stroke="#111" stroke-width="1.4"/>
<polyline points="18.6,338.8 20.8,332.8 25.4,337.3 31.5,340.4 36.0,337.8 39.8,339.6 43.6,344.1 45.1,348.0 46.6,338.8 52.0,342.6 55.7,337.3 59.5,335.8 64.0,323.7 65.6,312.6 70.9,312.0 76.2,313.8 77.7,317.6 80.8,307.7 85.3,299.8 88.4,297.9 89.9,299.4 91.4,315.3 92.9,326.0 96.7,343.4 100.5,344.9 102.0,344.9 104.3,348.0 106.6,341.1 108.8,341.9 112.6,338.8 116.4,338.1 122.5,326.7 125.5,326.0 129.3,329.0 132.8,333.0 134.9,333.0 137.7,335.1 140.5,335.1 144.7,339.6 149.5,337.9 155.1,336.5 158.6,337.9 163.5,343.5 167.7,342.8 171.9,346.3 174.6,349.8 180.2,335.8 183.0,331.0 186.9,327.0 190.0,331.6 197.0,328.6 199.1,338.6 205.3,342.1 210.9,335.8 215.1,335.8 218.6,333.7 222.8,335.8 229.8,335.8 232.6,337.9 236.7,332.7 240.2,334.4 245.8,335.1 248.8,338.6 251.3,334.8 254.4,336.5 257.9,342.8 261.1,347.0 262.7,339.6 266.9,344.9 271.1,346.0 276.0,349.8 280.2,349.5 282.3,344.9 285.8,348.4 288.6,347.0 292.0,346.6 296.0,336.8 299.0,340.0 302.5,342.8 305.3,355.3 307.4,356.7 310.9,356.7 312.7,351.2 317.9,354.0 322.0,338.6 324.8,343.5 326.9,339.0 333.2,342.4 340.9,349.8 343.7,342.8 347.2,342.5 356.2,339.3 359.7,330.9 362.5,333.0 364.8,333.5 366.9,339.8 369.7,336.3 371.8,328.6 376.7,341.6 378.7,340.7 381.5,341.6 384.3,345.3 387.1,344.6 389.2,344.9 391.0,347.0 395.5,310.5 398.3,313.3 400.8,325.1 402.7,323.0 408.0,339.0 410.1,341.2 412.9,340.0 416.4,341.2 419.9,339.0 423.4,340.2 426.9,337.7 430.4,339.0 436.0,332.8 441.5,330.4 446.4,330.4 449.9,318.8 454.1,316.0 457.6,313.3 460.4,315.6 465.0,312.8 467.3,315.3 469.4,323.7 472.2,325.8 474.3,322.7 477.1,325.5 480.8,321.6 485.7,324.8 488.5,323.0 490.8,317.4 492.7,327.2 497.5,322.6 502.4,330.4 506.6,330.0 510.1,328.6 512.2,333.5 517.1,337.7 519.9,337.0 522.6,340.7 526.1,340.2 528.9,341.6 531.0,337.4 533.1,341.6 545.0,347.2 547.8,333.5 549.9,339.0 552.0,331.4 554.0,329.6 557.5,328.6 561.7,320.9 563.8,325.4 567.3,325.8 569.4,327.5 570.8,325.8 575.7,332.8 578.5,339.8 582.0,341.9 586.1,339.0 590.3,343.0 593.8,342.6 596.8,336.3 600.3,332.8 604.9,334.9 607.3,327.9 609.1,328.6 612.1,322.6 616.3,322.3 619.1,318.8 621.2,320.9 623.0,338.0 625.8,330.7 628.2,337.7 633.8,330.4 640.7,334.9 646.3,331.4 650.5,331.0 652.3,332.8 654.0,329.0 657.5,329.3 658.9,327.9 661.0,330.7 665.9,329.0 670.7,331.0 675.6,331.8 677.7,339.8 679.8,339.8 682.6,329.6 685.4,332.1 688.9,330.0 691.7,324.4 694.7,326.8 696.6,323.0 699.3,321.6 701.7,317.9 705.6,325.8 709.1,330.7 711.9,328.6 713.6,328.4 715.8,333.9 717.9,328.8 721.1,328.8 724.5,340.5 728.1,334.5 733.0,331.4 736.8,325.0 741.7,332.6 745.1,330.8 747.2,330.2 751.1,316.3 754.1,315.1 756.6,321.8 759.0,325.6 760.8,321.8 763.2,324.8 765.6,322.7 769.9,324.8 772.9,332.6 775.3,329.6 780.7,328.1 782.6,329.6 785.0,326.0 788.0,327.6 791.0,327.6 796.5,334.5 800.0,338.1 804.3,332.6 806.1,320.3" fill="none" stroke="#1f6fd0" stroke-width="1.3" stroke-linejoin="round"/>
<polyline points="18.9,436.2 24.5,433.8 30.7,435.7 33.5,431.6 36.3,430.6 40.5,432.4 46.8,437.6 51.0,437.8 55.2,439.6 58.6,436.2 62.1,435.5 65.6,427.8 68.7,420.1 70.5,421.8 76.1,416.6 79.6,417.7 83.1,416.6 88.0,408.7 90.0,409.7 92.8,422.9 96.3,432.0 101.9,439.6 106.8,439.9 112.4,436.6 117.3,439.6 122.8,443.8 129.8,426.4 132.8,424.6 135.6,426.8 139.1,425.4 141.9,428.2 146.0,433.4 148.8,433.4 150.9,430.6 153.7,435.5 156.5,438.3 164.2,444.5 168.4,441.7 171.9,443.6 174.6,447.7 180.2,436.2 185.8,431.6 191.4,432.4 197.0,427.8 201.2,434.3 205.3,434.8 210.2,428.5 213.7,431.6 217.9,437.6 222.8,439.9 227.7,437.1 229.8,439.0 233.3,431.3 238.8,423.6 244.4,430.6 248.8,434.8 254.4,433.8 256.0,432.0 258.6,436.6 263.4,440.8 266.2,439.4 278.1,449.1 281.6,445.0 287.2,449.7 296.2,436.9 302.5,437.1 306.0,448.7 310.2,446.9 313.7,443.6 318.6,445.0 325.5,440.3 332.5,442.7 336.7,443.8 339.5,436.6 344.4,439.0 346.5,433.0 353.4,432.4 357.6,434.8 360.4,431.6 365.5,432.5 367.6,433.6 369.7,431.1 371.8,426.6 377.1,423.8 378.8,436.0 382.3,437.4 385.7,439.7 388.5,439.2 394.1,443.0 396.2,432.5 401.1,433.9 408.1,440.9 415.1,440.9 417.9,439.7 426.2,439.7 430.4,452.7 433.9,447.2 438.8,442.3 442.3,419.9 447.2,421.6 453.5,410.1 454.9,412.2 457.7,408.0 459.8,411.5 465.4,410.1 472.3,421.6 481.5,422.2 485.7,428.2 488.5,429.2 493.3,434.1 498.9,435.2 504.5,431.3 508.7,433.0 514.3,435.5 517.8,439.0 524.0,443.6 526.1,441.0 532.4,444.5 540.8,445.0 544.3,445.9 547.8,442.4 549.9,436.9 554.0,431.6 556.1,432.7 561.7,426.0 565.2,426.0 570.8,424.0 575.7,425.0 580.6,430.6 585.4,433.0 587.5,436.6 589.6,435.5 595.2,443.8 597.5,443.8 600.3,441.0 602.1,436.9 605.2,439.6 609.3,432.0 612.1,428.5 615.6,420.8 618.4,422.2 621.2,422.9 623.3,428.5 627.5,429.6 638.6,433.0 641.4,435.7 644.2,435.5 649.8,436.6 653.3,438.0 657.5,428.5 661.0,429.6 663.8,428.8 669.3,431.6 671.0,426.0 673.3,429.6 675.6,425.7 677.7,434.8 683.3,436.9 685.4,431.0 688.9,431.0 691.0,434.1 695.2,428.2 697.2,429.6 702.1,427.1 704.2,428.8 707.0,428.2 709.1,429.6 713.0,426.6 717.9,430.5 720.9,429.0 724.5,437.2 729.3,435.1 734.2,437.7 737.2,434.1 742.0,435.7 745.1,432.6 746.9,433.6 750.5,428.0 755.3,422.4 760.8,424.8 763.2,423.0 768.0,423.9 772.9,428.8 775.9,426.6 781.9,425.6 786.8,436.3 791.0,433.9 793.4,432.0 797.1,438.5 798.9,437.2 801.3,439.7 804.3,437.7 805.5,435.1" fill="none" stroke="#1e9a1e" stroke-width="1.25" stroke-linejoin="round"/>
<polyline points="18.9,426.4 21.0,431.0 26.6,427.8 32.8,427.1 35.6,433.4 37.7,428.8 42.6,432.0 44.7,427.8 48.2,426.8 54.7,420.8 59.3,426.4 65.6,444.5 72.6,444.5 79.6,453.6 83.8,458.9 90.0,462.0 92.1,450.8 95.6,439.6 99.8,427.8 102.6,426.8 106.8,428.8 111.7,427.8 115.9,422.9 120.7,423.6 122.8,420.8 126.3,422.9 128.4,431.3 130.0,433.4 132.8,440.0 137.0,438.0 141.2,435.7 146.0,431.6 148.8,433.4 150.9,431.3 153.7,424.0 158.6,421.8 160.7,414.8 164.2,416.2 166.3,415.9 167.7,418.7 174.6,418.0 177.4,422.2 180.0,434.3 183.0,429.9 185.1,434.3 191.4,432.4 194.2,432.0 197.7,436.2 201.2,432.0 204.6,431.0 210.9,434.1 213.0,426.0 215.1,428.2 217.9,422.9 222.8,423.6 227.7,425.7 231.9,421.8 238.8,439.0 243.7,431.6 248.8,428.8 250.9,429.6 253.7,426.0 256.5,428.2 262.7,426.0 266.2,426.8 270.4,418.7 273.9,416.6 280.2,416.6 282.0,419.8 284.4,414.5 287.2,413.8 289.3,417.6 292.0,419.0 299.7,428.2 303.9,427.1 306.0,428.2 308.1,418.4 311.3,419.0 313.0,422.6 315.5,419.0 318.6,420.8 324.1,425.7 331.8,419.8 338.1,420.8 339.2,419.0 343.7,434.8 345.8,428.2 352.7,430.6 356.2,426.0 360.4,430.2 364.8,430.4 369.7,431.8 371.8,437.0 375.3,437.0 377.4,427.6 379.5,430.8 382.3,429.4 385.7,424.8 388.5,426.6 390.6,422.7 394.1,429.7 395.8,445.0 398.0,433.2 403.2,431.1 410.2,422.4 416.5,422.0 420.7,423.8 424.2,423.4 427.0,420.6 428.8,395.5 430.4,396.2 431.8,408.7 434.6,410.8 438.1,410.4 440.2,415.0 443.0,438.0 448.6,453.4 457.0,461.1 461.4,457.3 465.4,457.9 470.9,445.0 476.5,444.8 482.2,442.4 487.0,434.1 491.3,435.7 494.7,431.0 500.3,432.4 505.2,433.4 511.5,432.7 514.0,427.8 519.9,426.8 522.6,424.0 526.1,415.9 528.9,421.8 533.8,418.7 538.0,420.8 542.2,420.4 544.7,415.9 547.8,422.9 554.0,432.4 561.7,439.0 566.6,436.9 569.4,439.0 575.0,438.5 579.9,431.6 585.4,428.2 588.2,424.3 592.4,421.5 594.9,415.9 598.0,420.1 601.7,424.6 604.9,424.0 609.3,432.0 615.6,443.8 619.1,443.1 620.8,445.0 624.7,439.0 631.0,435.5 634.5,434.8 638.4,435.5 640.0,431.0 644.2,429.9 647.7,429.2 651.2,427.8 654.0,427.1 661.0,434.8 665.2,432.7 670.0,431.3 675.6,435.7 679.8,428.8 683.3,434.8 686.8,432.0 690.3,431.6 691.7,435.7 696.6,436.2 700.0,439.9 704.2,438.0 709.1,435.7 714.2,439.7 716.0,434.1 718.5,435.7 722.7,435.1 725.1,429.6 729.3,430.2 733.0,425.6 735.4,427.2 737.2,431.7 743.9,433.9 746.9,429.6 748.7,435.1 751.1,439.3 755.3,441.1 758.4,439.9 760.8,442.3 763.8,440.5 766.8,440.5 770.5,436.9 775.3,435.1 779.5,438.7 781.9,431.7 788.6,429.0 790.4,432.9 794.0,428.4 800.1,428.4 803.7,429.0 805.5,436.3" fill="none" stroke="#d42020" stroke-width="1.25" stroke-linejoin="round"/>
<line x1="522" y1="544.5" x2="811" y2="533.3" stroke="#111" stroke-width="1.4"/>
<polyline points="18.9,527.4 21.0,519.8 25.9,526.0 32.1,529.1 36.3,525.8 40.5,529.5 44.0,538.3 45.4,541.4 46.8,530.9 51.7,534.7 55.9,526.7 59.3,524.9 64.2,509.0 65.9,495.1 70.5,494.0 75.4,495.6 77.9,505.1 81.0,493.3 82.6,495.6 85.9,488.7 88.2,486.7 90.5,496.7 91.4,517.7 96.3,542.8 99.1,545.6 102.6,546.7 104.0,548.6 106.8,542.1 110.3,540.3 115.9,536.5 123.5,511.4 125.6,510.0 128.4,513.5 130.5,514.6 132.8,520.7 135.3,521.2 137.7,526.0 140.0,526.0 144.7,535.8 149.5,533.7 152.3,534.7 155.8,530.9 159.3,532.3 163.8,538.9 167.7,535.8 171.9,540.0 174.9,546.7 180.2,524.6 183.0,518.0 186.9,512.1 190.0,518.0 197.3,513.5 199.1,529.5 205.3,536.5 209.5,531.6 215.1,529.5 218.6,524.9 222.8,526.7 229.8,523.3 231.9,524.9 234.9,524.9 237.2,520.7 240.2,524.4 245.8,525.3 248.8,529.5 250.9,525.3 254.4,526.7 257.9,535.8 261.1,540.7 263.0,531.9 266.9,539.3 269.7,541.4 273.2,542.1 275.3,547.0 279.5,544.5 282.0,535.8 284.4,539.3 287.2,538.6 289.3,534.7 292.0,533.3 296.0,518.8 299.0,524.4 302.9,526.7 305.3,547.0 308.8,549.8 311.3,548.1 313.0,541.4 317.9,544.5 321.6,526.7 324.8,532.7 326.6,525.8 330.4,527.7 333.9,528.1 337.4,532.3 340.9,538.9 343.7,528.8 347.9,528.6 356.2,524.6 359.7,515.2 362.5,518.4 364.8,518.0 366.9,525.8 369.7,522.6 371.8,513.8 376.7,534.7 378.7,533.7 381.5,534.7 384.0,540.7 387.1,539.7 389.2,538.9 391.0,541.7 395.5,503.7 398.3,506.2 400.8,516.0 402.7,515.2 409.4,533.7 412.9,535.1 417.1,538.6 419.9,536.9 424.1,541.7 427.6,537.5 430.4,535.1 436.0,518.0 441.5,510.7 445.7,511.8 449.9,497.0 454.8,490.0 458.0,490.9 460.4,500.6 465.0,500.2 469.4,519.1 472.2,522.1 474.3,519.1 477.1,524.6 480.8,522.1 485.7,526.7 488.5,524.9 490.8,516.0 492.7,525.8 497.8,518.0 502.4,528.6 506.6,529.5 510.1,526.7 512.2,533.3 517.1,537.5 519.2,536.9 522.6,541.1 526.1,538.9 528.9,539.7 531.0,532.7 533.1,537.5 539.4,538.9 544.3,536.1 547.8,521.6 549.9,528.1 552.0,518.4 554.7,515.6 557.5,516.0 561.7,507.6 564.5,512.8 567.3,512.8 569.4,516.6 570.8,516.0 575.7,526.0 578.5,535.8 582.0,540.7 586.1,537.5 590.3,541.4 593.8,538.6 596.8,529.1 600.3,522.6 604.9,523.0 607.3,514.9 609.1,514.6 612.1,508.6 614.9,509.0 616.3,510.7 619.1,507.9 621.2,511.4 623.0,530.9 625.8,524.0 628.2,532.7 633.8,525.3 640.7,530.9 647.0,524.9 651.2,525.8 653.7,520.2 657.5,520.5 658.9,519.1 661.0,524.0 665.9,520.7 669.3,521.6 675.6,526.7 677.7,535.8 679.8,535.8 682.6,524.4 685.4,525.8 688.9,521.9 691.7,516.0 694.7,519.8 697.0,514.2 699.3,515.2 701.7,512.1 705.6,519.1 708.7,524.4 712.4,522.4 715.8,529.9 717.9,523.9 721.1,525.7 723.3,536.6 725.1,536.6 728.1,530.5 733.0,526.3 736.8,516.8 741.7,525.7 746.3,522.6 751.1,506.9 754.1,505.1 756.6,512.0 759.0,518.8 760.8,514.2 763.2,517.8 765.6,517.2 769.9,519.0 772.9,531.1 775.3,527.7 778.3,526.9 781.9,530.9 785.0,523.9 788.0,525.3 789.8,523.9 792.8,525.3 797.1,531.7 798.9,530.1 800.9,534.5 804.3,527.5 806.1,511.5" fill="none" stroke="#1f6fd0" stroke-width="1.3" stroke-linejoin="round"/>
</svg></body></html>
